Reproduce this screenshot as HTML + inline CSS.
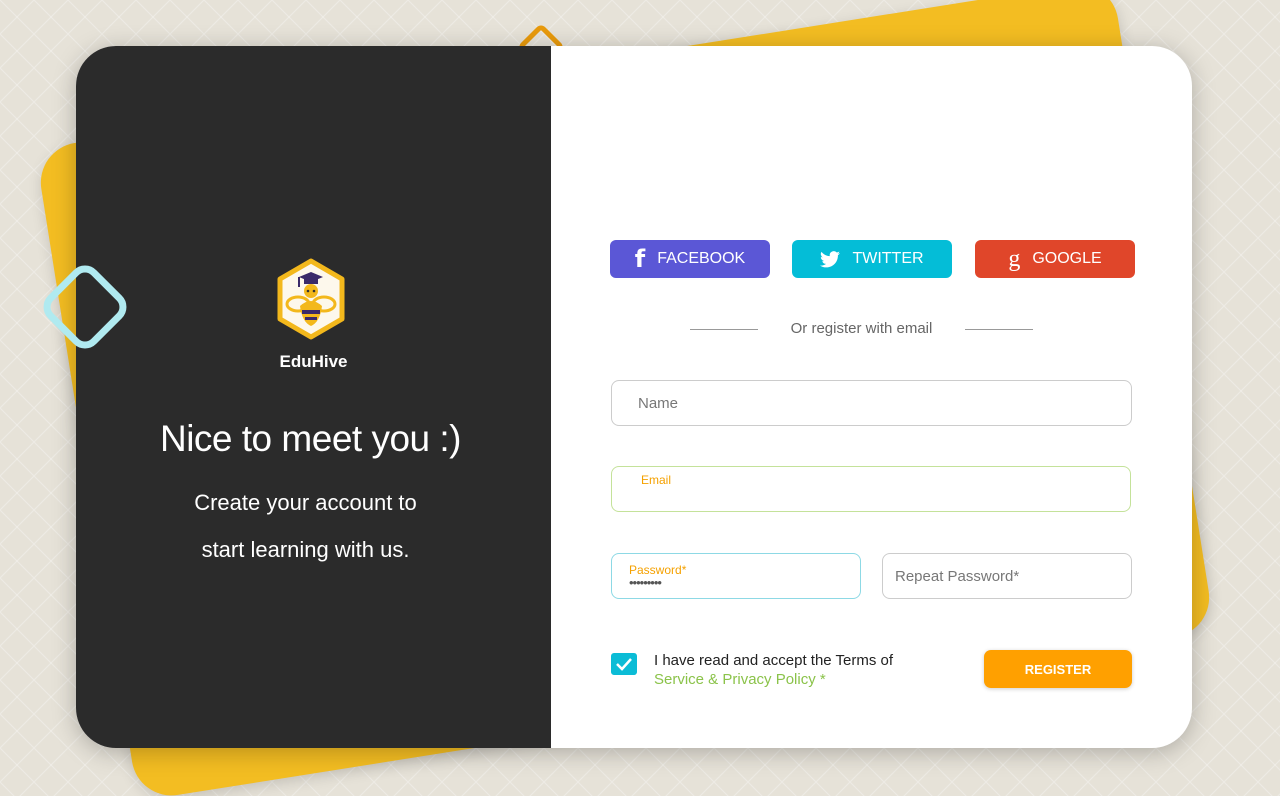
<!DOCTYPE html>
<html><head><meta charset="utf-8"><style>
*{margin:0;padding:0;box-sizing:border-box}
html,body{width:1280px;height:796px;overflow:hidden}
body{background:#e6e2d8;font-family:"Liberation Sans",sans-serif;position:relative}
.pat{position:absolute;inset:0;background-image:linear-gradient(45deg,transparent 48%,rgba(255,255,255,.35) 50%,transparent 52%),linear-gradient(-45deg,transparent 48%,rgba(255,255,255,.35) 50%,transparent 52%);background-size:34px 34px}
.yel{position:absolute;left:80px;top:60px;width:1090px;height:660px;background:#f3bd22;border-radius:40px;transform:rotate(-9deg);box-shadow:0 4px 14px rgba(0,0,0,.15)}
.card{position:absolute;left:76px;top:46px;width:1116px;height:702px;border-radius:40px;overflow:hidden;background:#fff;box-shadow:0 4px 24px rgba(0,0,0,.25)}
.left{position:absolute;left:0;top:0;width:475px;height:702px;background:#2b2b2b;color:#fff;text-align:center}
.btn{position:absolute;top:194px;width:160px;height:38px;border-radius:6px;color:#fff;font-size:16px;display:flex;align-items:center;justify-content:center;gap:12px}
.in{position:absolute;height:46px;border:1px solid #ccc;border-radius:8px;color:#777;font-size:15px;padding-left:26px;display:flex;align-items:center}
</style></head><body>
<div class="pat"></div>
<div class="yel"></div>
<div style="position:absolute;left:524px;top:30px;width:34px;height:34px;border:5px solid #e89a0c;border-radius:6px;transform:rotate(45deg)"></div>
<div class="card">
<div class="left">
<svg style="position:absolute;left:200px;top:212px" width="70" height="82" viewBox="0 0 70 82"><polygon points="35,3 66,21 66,61 35,79 4,61 4,21" fill="#fdf8ec" stroke="#f3b81c" stroke-width="5" stroke-linejoin="round"/><polygon points="35,14 47,19 35,24 23,19" fill="#3a2a6a"/><rect x="28" y="20" width="14" height="6" fill="#3a2a6a"/><line x1="23" y1="19" x2="23" y2="29" stroke="#3a2a6a" stroke-width="2"/><circle cx="35" cy="33" r="7" fill="#f3b81c"/><circle cx="32" cy="33" r="1.3" fill="#333"/><circle cx="38" cy="33" r="1.3" fill="#333"/><ellipse cx="22" cy="46" rx="11" ry="7" fill="none" stroke="#f3b81c" stroke-width="3"/><ellipse cx="48" cy="46" rx="11" ry="7" fill="none" stroke="#f3b81c" stroke-width="3"/><path d="M24 48 Q35 38 46 48 Q44 64 35 68 Q26 64 24 48Z" fill="#f3b81c"/><rect x="26" y="52" width="18" height="4" fill="#3a2a6a"/><rect x="29" y="59" width="12" height="3" fill="#3a2a6a"/></svg>
<div style="position:absolute;top:306px;width:100%;font-size:17px;font-weight:bold">EduHive</div>
<div style="position:absolute;top:372px;left:-3px;width:100%;font-size:37px;letter-spacing:-0.5px">Nice to meet you :)</div>
<div style="position:absolute;top:433px;left:-8px;width:100%;font-size:22px;line-height:47px">Create your account to<br>start learning with us.</div>
</div>
<div class="btn" style="left:534px;background:#5b57d6"><b style="font-size:24px;font-family:'DejaVu Sans'">f</b>FACEBOOK</div>
<div class="btn" style="left:716px;background:#04bdd7"><svg width="20" height="17" viewBox="0 0 24 20"><path d="M24 2.4a10 10 0 0 1-2.8.8A5 5 0 0 0 23.3.4a10 10 0 0 1-3.1 1.2A4.9 4.9 0 0 0 11.8 6 14 14 0 0 1 1.7.9a4.9 4.9 0 0 0 1.5 6.6A5 5 0 0 1 1 6.9a4.9 4.9 0 0 0 3.9 4.9 5 5 0 0 1-2.2.1 4.9 4.9 0 0 0 4.6 3.4A9.9 9.9 0 0 1 0 17.3 14 14 0 0 0 7.5 19.5c9.1 0 14-7.5 14-14v-.6A10 10 0 0 0 24 2.4z" fill="#fff"/></svg>TWITTER</div>
<div class="btn" style="left:899px;background:#e0462a"><span style="font-family:'Liberation Serif';font-size:24px">g</span>GOOGLE</div>
<div style="position:absolute;left:614px;top:283px;width:68px;border-top:1px solid #999"></div>
<div style="position:absolute;left:889px;top:283px;width:68px;border-top:1px solid #999"></div>
<div style="position:absolute;left:682px;top:274px;width:207px;text-align:center;font-size:15px;color:#666">Or register with email</div>
<div class="in" style="left:535px;top:334px;width:521px">Name</div>
<div class="in" style="left:535px;top:420px;width:520px;border-color:#c4e29a;align-items:flex-start;padding-top:6px;padding-left:29px;font-size:12px;color:#f5a100">Email</div>
<div class="in" style="left:535px;top:507px;width:250px;border-color:#8dd9e5;flex-direction:column;align-items:flex-start;justify-content:center;padding-left:17px;font-size:12px;color:#f5a100">Password*<span style="color:#555;font-size:13px;letter-spacing:-1px;line-height:12px">•••••••••</span></div>
<div class="in" style="left:806px;top:507px;width:250px;padding-left:12px">Repeat Password*</div>
<div style="position:absolute;left:535px;top:607px;width:26px;height:22px;background:#0bbcd6;border-radius:3px"><svg width="26" height="22"><path d="M6 11 L11 16 L20 6" stroke="#fff" stroke-width="2.5" fill="none"/></svg></div>
<div style="position:absolute;left:578px;top:605px;font-size:15px;color:#222;line-height:19px">I have read and accept the Terms of<br><span style="color:#8bc34a">Service &amp; Privacy Policy *</span></div>
<div style="position:absolute;left:908px;top:604px;width:148px;height:38px;background:#ffa000;border-radius:7px;color:#fff;font-size:13px;font-weight:bold;display:flex;align-items:center;justify-content:center;box-shadow:0 1px 4px rgba(0,0,0,.2)">REGISTER</div>
</div>
<div style="position:absolute;left:51px;top:273px;width:68px;height:68px;border:7px solid #b0eaf0;border-radius:16px;transform:rotate(45deg)"></div>
</body></html>
